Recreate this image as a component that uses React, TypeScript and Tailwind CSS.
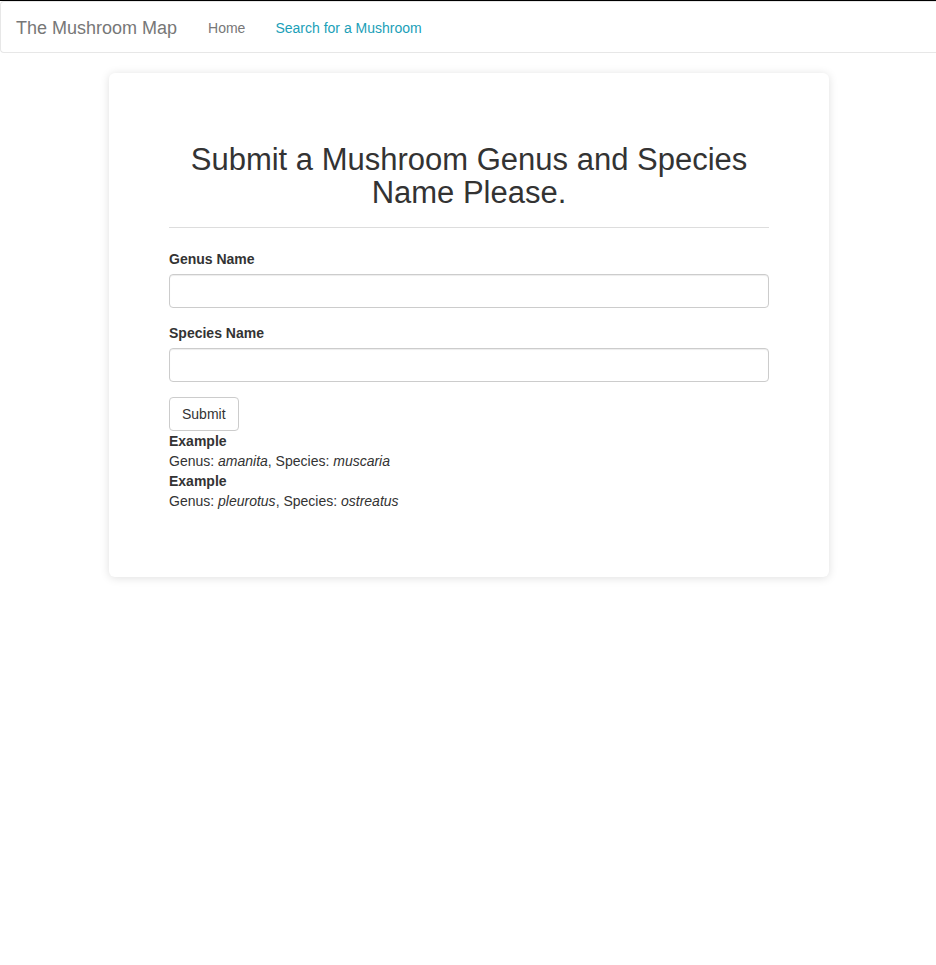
import { useState } from "react";

const Navbar = () => {
    return (
        <div className="w-full">
            <div className="h-px bg-black" />
            <nav className="flex h-[52px] items-center rounded-l-[4px] border border-r-0 border-[#e7e7e7] bg-white pt-[2px]">
                <a href="#" className="px-[15px] text-[18px] text-[#777777]">
                    The Mushroom Map
                </a>
                <ul className="flex">
                    <li>
                        <a href="#" className="block pl-[16px] pr-[15px] text-[14px] text-[#777777]">
                            Home
                        </a>
                    </li>
                    <li>
                        <a href="#" className="block px-[15px] text-[14px] text-[#1aa0b8]">
                            Search for a Mushroom
                        </a>
                    </li>
                </ul>
            </nav>
        </div>
    );
};

interface FieldProps {
    id: string;
    label: string;
    value: string;
    onChange: (event: React.ChangeEvent<HTMLInputElement>) => void;
}

const Field = ({ id, label, value, onChange }: FieldProps) => (
    <div className="mb-[15px]">
        <label htmlFor={id} className="mb-[5px] inline-block text-[14px] font-bold leading-5">
            {label}
        </label>
        <input
            id={id}
            type="text"
            value={value}
            onChange={onChange}
            className="block h-[34px] w-full rounded-[4px] border border-[#cccccc] px-3 text-[14px] shadow-[inset_0_1px_1px_rgba(0,0,0,0.075)] outline-none"
        />
    </div>
);

export default function App() {
    const [search, setSearch] = useState({ genus: "", species: "" });

    return (
        <div className="min-h-screen bg-white font-['Liberation_Sans',Arial,sans-serif] text-[14px] leading-5 text-[#333333]">
            <Navbar />
            <div className="flex justify-center pl-[2px]">
                <div className="mt-5 w-[720px] rounded-[6px] bg-white px-[60px] pb-[66px] pt-[70px] shadow-[0_1px_10px_rgba(0,0,0,0.13)]">
                    <h2 className="mb-[18px] text-center text-[31px] leading-[33px]">
                        Submit a Mushroom Genus and Species Name Please.
                    </h2>
                    <hr className="mb-[21px] border-t border-[#dddddd]" />
                    <form onSubmit={(e) => e.preventDefault()}>
                        <Field
                            id="genus"
                            label="Genus Name"
                            value={search.genus}
                            onChange={(e) => setSearch({ ...search, genus: e.target.value })}
                        />
                        <Field
                            id="species"
                            label="Species Name"
                            value={search.species}
                            onChange={(e) => setSearch({ ...search, species: e.target.value })}
                        />
                        <button
                            type="submit"
                            className="h-[34px] rounded-[4px] border border-[#cccccc] bg-white px-3 text-[14px] text-[#333333]"
                        >
                            Submit
                        </button>
                    </form>
                    <div>
                        <p className="font-bold">Example</p>
                        <p>
                            Genus: <i>amanita</i>, Species: <i>muscaria</i>
                        </p>
                        <p className="font-bold">Example</p>
                        <p>
                            Genus: <i>pleurotus</i>, Species: <i>ostreatus</i>
                        </p>
                    </div>
                </div>
            </div>
        </div>
    );
}
